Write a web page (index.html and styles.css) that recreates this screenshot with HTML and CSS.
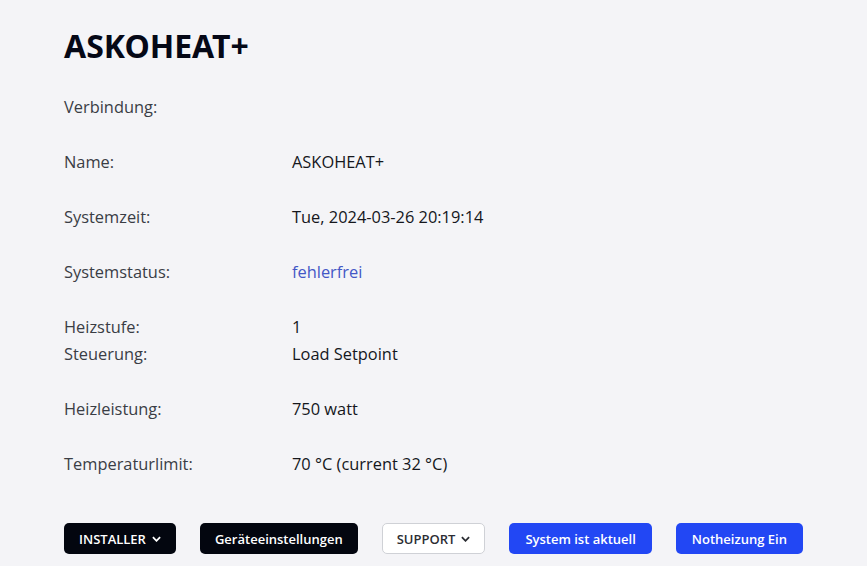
FILE: index.html
```html
<!DOCTYPE html>
<html>
<head>
  <meta charset="UTF-8">
  <link rel="stylesheet" href="styles.css">
</head>
<body>
  <div class="page">
    <h1 class="title">ASKOHEAT+</h1>

    <div class="group">
      <div class="row"><span class="label">Verbindung:</span><span class="value"></span></div>
    </div>
    <div class="group">
      <div class="row"><span class="label">Name:</span><span class="value">ASKOHEAT+</span></div>
    </div>
    <div class="group">
      <div class="row"><span class="label">Systemzeit:</span><span class="value">Tue, 2024-03-26 20:19:14</span></div>
    </div>
    <div class="group">
      <div class="row"><span class="label">Systemstatus:</span><span class="value status-ok">fehlerfrei</span></div>
    </div>
    <div class="group">
      <div class="row"><span class="label">Heizstufe:</span><span class="value">1</span></div>
      <div class="row"><span class="label">Steuerung:</span><span class="value">Load Setpoint</span></div>
    </div>
    <div class="group">
      <div class="row"><span class="label">Heizleistung:</span><span class="value">750 watt</span></div>
    </div>
    <div class="group">
      <div class="row"><span class="label">Temperaturlimit:</span><span class="value">70 °C (current 32 °C)</span></div>
    </div>

    <div class="actions">
      <button class="btn btn-dark">INSTALLER
        <svg class="chevron" viewBox="0 0 10 6"><path d="M1 1l4 4 4-4" /></svg>
      </button>
      <button class="btn btn-dark">Geräteeinstellungen</button>
      <button class="btn btn-outline">SUPPORT
        <svg class="chevron" viewBox="0 0 10 6"><path d="M1 1l4 4 4-4" /></svg>
      </button>
      <button class="btn btn-blue">System ist aktuell</button>
      <button class="btn btn-blue">Notheizung Ein</button>
    </div>
  </div>
</body>
</html>
```

FILE: styles.css
```css
* {
  margin: 0;
  padding: 0;
  box-sizing: border-box;
}

body {
  font-family: "Open Sans", "Noto Sans", sans-serif;
  background-color: #f4f4f7;
  color: #111;
}

.page {
  padding: 24px 64px 0;
}

.title {
  font-family: "Noto Sans", sans-serif;
  font-size: 32px;
  font-weight: 700;
  color: #050816;
  line-height: 44px;
  margin-bottom: 25px;
}

.group {
  margin-bottom: 28px;
}

.row {
  display: flex;
  font-size: 16.4px;
  line-height: 27px;
}

.label {
  width: 228px;
  color: #3a3d45;
}

.value {
  color: #15171c;
}

.status-ok {
  color: #4357c6;
}

.actions {
  display: flex;
  gap: 24px;
  margin-top: 46px;
}

.btn {
  display: flex;
  align-items: center;
  gap: 6px;
  height: 31px;
  padding: 0 14px;
  border: 1px solid transparent;
  border-radius: 5px;
  font-family: inherit;
  font-size: 13px;
  font-weight: 600;
  white-space: nowrap;
  cursor: pointer;
}

.btn-dark {
  background-color: #03060f;
  color: #fff;
}

.btn-outline {
  background-color: #fff;
  border-color: #cfd1d6;
  color: #2b2d33;
}

.btn-blue {
  background-color: #2247f4;
  color: #fff;
  padding: 0 15px;
}

.chevron {
  width: 9px;
  height: 6px;
  fill: none;
  stroke: currentColor;
  stroke-width: 2;
}
```
